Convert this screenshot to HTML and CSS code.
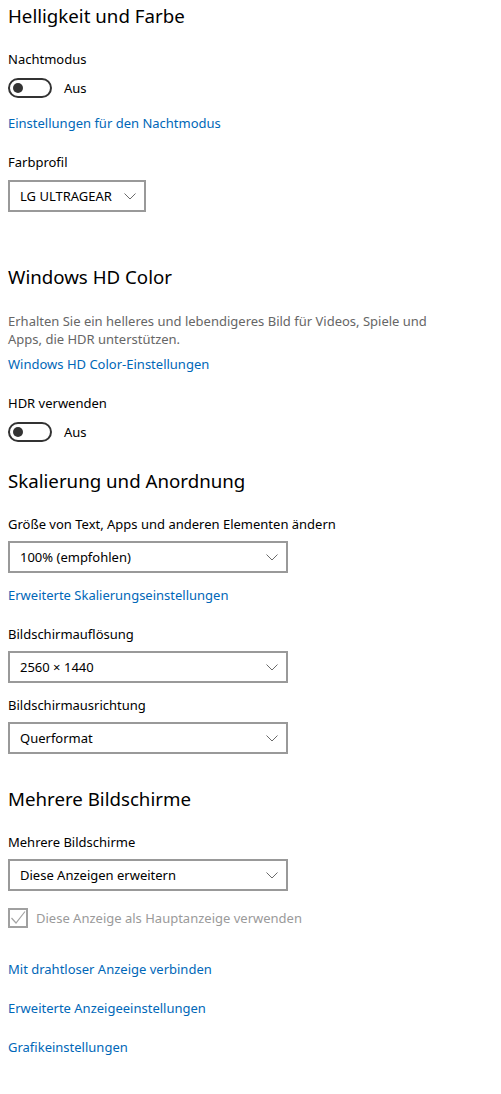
FILE: index.html
```html
<!DOCTYPE html>
<html lang="de">
<head>
<meta charset="utf-8">
<title>Anzeige</title>
<link rel="stylesheet" href="styles.css">
</head>
<body>
<main class="page">
  <section class="group first">
    <h2 class="group-title">Helligkeit und Farbe</h2>
    <div class="label">Nachtmodus</div>
    <div class="toggle-row"><span class="toggle"><span class="knob"></span></span><span class="toggle-text">Aus</span></div>
    <a class="link after-toggle" href="#">Einstellungen für den Nachtmodus</a>
    <div class="label after-link">Farbprofil</div>
    <div class="select select-small"><span class="select-text">LG ULTRAGEAR</span><svg class="chev" width="12" height="7" viewBox="0 0 12 7"><path d="M0.5 0.5 L6 6 L11.5 0.5" fill="none" stroke="#6b6b6b" stroke-width="1"/></svg></div>
  </section>

  <section class="group hd">
    <h2 class="group-title">Windows HD Color</h2>
    <p class="desc">Erhalten Sie ein helleres und lebendigeres Bild für Videos, Spiele und Apps, die HDR unterstützen.</p>
    <a class="link after-desc" href="#">Windows HD Color-Einstellungen</a>
    <div class="label after-link">HDR verwenden</div>
    <div class="toggle-row"><span class="toggle"><span class="knob"></span></span><span class="toggle-text">Aus</span></div>
  </section>

  <section class="group scale">
    <h2 class="group-title">Skalierung und Anordnung</h2>
    <div class="label">Größe von Text, Apps und anderen Elementen ändern</div>
    <div class="select"><span class="select-text">100% (empfohlen)</span><svg class="chev" width="12" height="7" viewBox="0 0 12 7"><path d="M0.5 0.5 L6 6 L11.5 0.5" fill="none" stroke="#6b6b6b" stroke-width="1"/></svg></div>
    <a class="link after-select" href="#">Erweiterte Skalierungseinstellungen</a>
    <div class="label after-link">Bildschirmauflösung</div>
    <div class="select"><span class="select-text">2560 × 1440</span><svg class="chev" width="12" height="7" viewBox="0 0 12 7"><path d="M0.5 0.5 L6 6 L11.5 0.5" fill="none" stroke="#6b6b6b" stroke-width="1"/></svg></div>
    <div class="label after-select">Bildschirmausrichtung</div>
    <div class="select"><span class="select-text">Querformat</span><svg class="chev" width="12" height="7" viewBox="0 0 12 7"><path d="M0.5 0.5 L6 6 L11.5 0.5" fill="none" stroke="#6b6b6b" stroke-width="1"/></svg></div>
  </section>

  <section class="group multi">
    <h2 class="group-title">Mehrere Bildschirme</h2>
    <div class="label">Mehrere Bildschirme</div>
    <div class="select"><span class="select-text">Diese Anzeigen erweitern</span><svg class="chev" width="12" height="7" viewBox="0 0 12 7"><path d="M0.5 0.5 L6 6 L11.5 0.5" fill="none" stroke="#6b6b6b" stroke-width="1"/></svg></div>
    <div class="check-row">
      <span class="checkbox"><svg width="16" height="16" viewBox="0 0 16 16"><path d="M1.5 8 L6 13 L15 1.5" fill="none" stroke="#a3a3a3" stroke-width="1.2"/></svg></span>
      <span class="check-text">Diese Anzeige als Hauptanzeige verwenden</span>
    </div>
    <a class="link after-check" href="#">Mit drahtloser Anzeige verbinden</a>
    <a class="link stacked" href="#">Erweiterte Anzeigeeinstellungen</a>
    <a class="link stacked" href="#">Grafikeinstellungen</a>
  </section>
</main>
</body>
</html>
```

FILE: styles.css
```css
html, body {
  margin: 0;
  padding: 0;
  background: #ffffff;
}

body {
  font-family: "Noto Sans", "Open Sans", sans-serif;
  font-size: 13px;
  line-height: 20px;
  color: #000000;
}

.page {
  padding: 0 8px 40px 8px;
  display: flex;
  flex-direction: column;
}

.group {
  display: flex;
  flex-direction: column;
  align-items: flex-start;
}

.group.first { margin-top: 2px; }
.group.hd { margin-top: 51px; }
.group.scale { margin-top: 25px; }
.group.multi { margin-top: 31px; }

.group-title {
  margin: 0 0 19px 0;
  font-size: 18.7px;
  line-height: 28px;
  font-weight: 400;
  color: #000000;
}

.label {
  color: #000000;
}

.label.after-link { margin-top: 19px; }
.label.after-select { margin-top: 12px; }

.toggle-row {
  margin-top: 9px;
  display: flex;
  align-items: center;
  height: 20px;
}

.toggle {
  box-sizing: border-box;
  width: 44px;
  height: 20px;
  border: 2px solid #333333;
  border-radius: 10px;
  display: flex;
  align-items: center;
  padding-left: 3px;
}

.knob {
  width: 10px;
  height: 10px;
  border-radius: 50%;
  background: #333333;
}

.toggle-text {
  margin-left: 12px;
}

.link {
  color: #0067b8;
  text-decoration: none;
}

.link.after-toggle { margin-top: 15px; }
.link.after-desc { margin-top: 6px; }
.link.after-select { margin-top: 12px; }
.link.after-check { margin-top: 31px; }
.link.stacked { margin-top: 19px; }

.desc {
  margin: 2px 0 0 0;
  max-width: 440px;
  line-height: 18px;
  color: #666666;
}

.select {
  box-sizing: border-box;
  margin-top: 7px;
  width: 280px;
  height: 32px;
  border: 2px solid #999999;
  display: flex;
  align-items: center;
  justify-content: space-between;
  padding: 0 8px 0 10px;
}

.select-small {
  margin-top: 8px;
  width: 138px;
}

.select-text {
  color: #000000;
}

.chev {
  display: block;
  flex: none;
}

.check-row {
  margin-top: 17px;
  display: flex;
  align-items: center;
  height: 20px;
}

.checkbox {
  box-sizing: border-box;
  width: 20px;
  height: 20px;
  border: 2px solid #a0a0a0;
  display: flex;
  align-items: center;
  justify-content: center;
}

.checkbox svg {
  display: block;
}

.check-text {
  margin-left: 8px;
  color: #9a9a9a;
}
```
